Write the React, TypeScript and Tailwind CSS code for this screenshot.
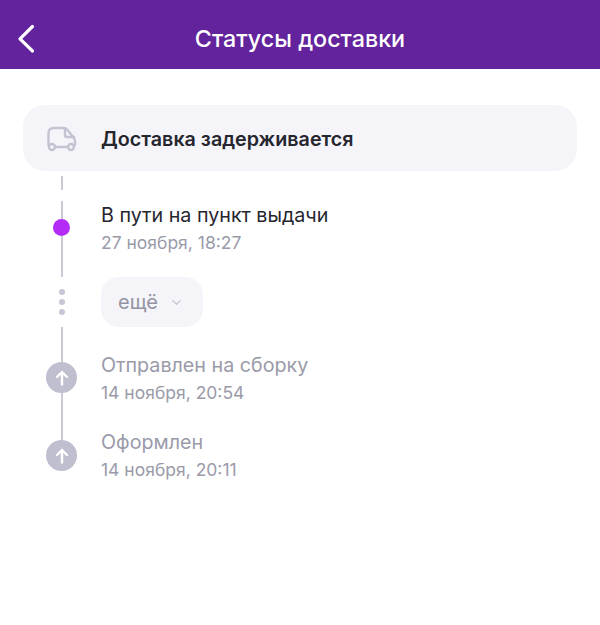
import { ChevronDown } from "lucide-react";

function UpCircle() {
  return (
    <div className="w-[31px] h-[31px] rounded-full bg-[#bfbfd0] flex items-center justify-center shrink-0">
      <svg width="16" height="18" viewBox="0 0 16 18" fill="none" stroke="#fff" strokeWidth="2.400" strokeLinecap="round" strokeLinejoin="round">
        <path d="M8 15.500V3M3 8 8 3l5 5" />
      </svg>
    </div>
  );
}

function Line({ className }: { className: string }) {
  return <div className={`w-[2px] bg-[#c9c9d8] shrink-0 ${className}`} />;
}

function StatusText({ title, date, active }: { title: string; date: string; active?: boolean }) {
  return (
    <div className="flex flex-col">
      <div className={`text-[19.700px] leading-[28px] ${active ? "text-[#26262e]" : "text-[#9a9aa9]"}`}>{title}</div>
      <div className="text-[17.500px] leading-[28px] text-[#9a9aa9]">{date}</div>
    </div>
  );
}

export default function App() {
  return (
    <div className="w-[600px] h-[625px] bg-white flex flex-col font-['Inter',sans-serif]">
      <header className="h-[69px] bg-[#62239c] flex items-center justify-center relative shrink-0 pt-[10px]">
        <svg className="absolute left-[16px] top-[24px]" width="20" height="30" viewBox="0 0 20 30" fill="none" stroke="#fff" strokeWidth="3.200" strokeLinecap="round" strokeLinejoin="round">
          <path d="M16.500 2.500 4 14.800 16.500 27" />
        </svg>
        <h1 className="text-[23.300px] font-medium text-white">Статусы доставки</h1>
      </header>

      <div className="flex flex-col px-[23px] pt-[36px]">
        <div className="h-[66px] rounded-[22px] bg-[#f4f4f9] flex items-center">
          <div className="w-[77px] mr-[1px] flex justify-center">
            <svg className="mt-[2px]" width="32" height="26" viewBox="0 0 32 26" fill="none" stroke="#c3c3d2" strokeWidth="2.400" strokeLinecap="round" strokeLinejoin="round">
              <path d="M2.500 19V7C2.500 4 4.500 2 7.500 2H17C19 2 20.500 2.800 21.500 4L27.500 11.500C28.500 12.800 29 14 29 15.500V19" />
              <path d="M9.500 21H21.500" />
              <path d="M19 2.500V9C19 10 19.500 11 21 11H28" />
              <circle cx="6" cy="21" r="3" />
              <circle cx="25" cy="21" r="3" />
            </svg>
          </div>
          <span className="text-[19.700px] font-semibold text-[#26262e] pt-[3px]">Доставка задерживается</span>
        </div>

        <div className="flex h-[106px]">
          <div className="w-[77px] mr-[1px] flex flex-col items-center">
            <Line className="h-[14px] mt-[5px]" />
            <Line className="h-[18px] mt-[11px]" />
            <div className="w-[17px] h-[17px] rounded-full bg-[#b32bf6] shrink-0" />
            <Line className="h-[41px]" />
          </div>
          <div className="pt-[30px]">
            <StatusText title="В пути на пункт выдачи" date="27 ноября, 18:27" active />
          </div>
        </div>

        <div className="flex h-[50px]">
          <div className="w-[77px] mr-[1px] flex flex-col items-center justify-center gap-[4px]">
            <div className="w-[6px] h-[6px] rounded-full bg-[#c6c6d6]" />
            <div className="w-[6px] h-[6px] rounded-full bg-[#c6c6d6]" />
            <div className="w-[6px] h-[6px] rounded-full bg-[#c6c6d6]" />
          </div>
          <div className="w-[102px] h-[50px] rounded-[18px] bg-[#f4f4f9] flex items-center pl-[17px] gap-[11px]">
            <span className="text-[20px] text-[#9393a3]">ещё</span>
            <ChevronDown size={15} color="#c3c3d2" strokeWidth={2} />
          </div>
        </div>

        <div className="flex h-[77px]">
          <div className="w-[77px] mr-[1px] flex flex-col items-center">
            <Line className="h-[35px]" />
            <UpCircle />
            <Line className="h-[11px]" />
          </div>
          <div className="pt-[24px]">
            <StatusText title="Отправлен на сборку" date="14 ноября, 20:54" />
          </div>
        </div>

        <div className="flex h-[67px]">
          <div className="w-[77px] mr-[1px] flex flex-col items-center">
            <Line className="h-[36px]" />
            <UpCircle />
          </div>
          <div className="pt-[24px]">
            <StatusText title="Оформлен" date="14 ноября, 20:11" />
          </div>
        </div>
      </div>
    </div>
  );
}
